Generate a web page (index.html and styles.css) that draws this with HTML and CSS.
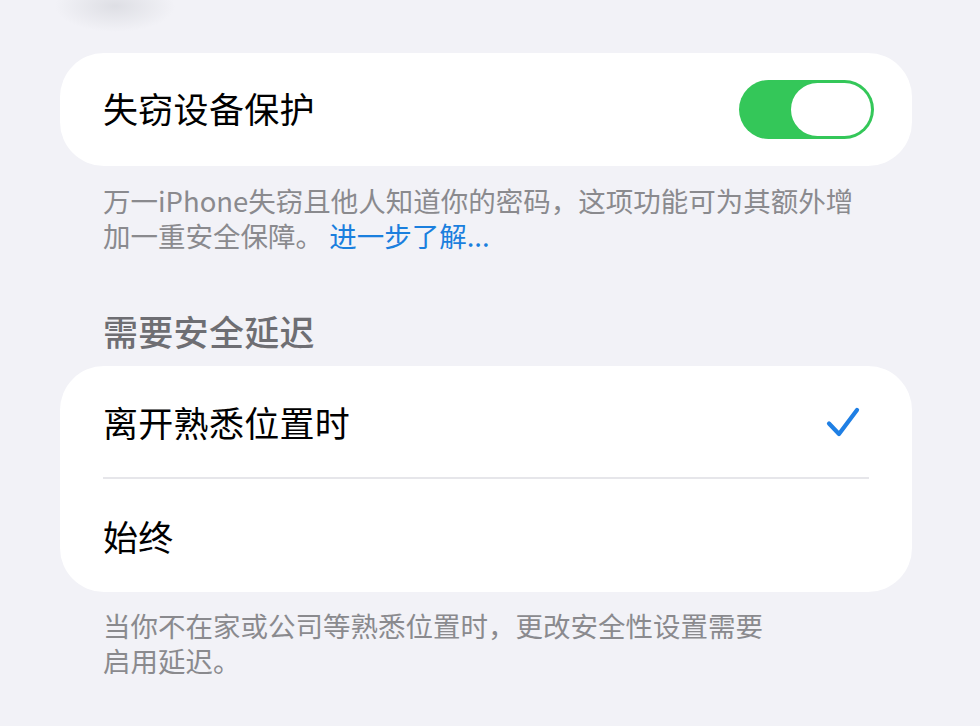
FILE: index.html
```html
<!DOCTYPE html>
<html lang="zh-CN">
<head>
<meta charset="utf-8">
<title>失窃设备保护</title>
<link rel="stylesheet" href="styles.css">
</head>
<body>
<main class="page">
  <section class="card card-single">
    <div class="row row-toggle">
      <span class="label">失窃设备保护</span>
      <span class="toggle"><span class="knob"></span></span>
    </div>
  </section>
  <p class="footer footer-first">万一iPhone失窃且他人知道你的密码，这项功能可为其额外增<br>加一重安全保障。 <a class="link" href="#">进一步了解...</a></p>

  <h2 class="section-header">需要安全延迟</h2>
  <section class="card">
    <div class="row row-first">
      <span class="label">离开熟悉位置时</span>
      <svg class="check" width="34" height="32" viewBox="0 0 34 32" aria-hidden="true">
        <path d="M3 17.5 L13 28 L31 4" fill="none" stroke="#1f7fe4" stroke-width="4.2" stroke-linecap="round" stroke-linejoin="round"/>
      </svg>
    </div>
    <div class="separator"></div>
    <div class="row row-last">
      <span class="label">始终</span>
    </div>
  </section>
  <p class="footer footer-second">当你不在家或公司等熟悉位置时，更改安全性设置需要<br>启用延迟。</p>
</main>
</body>
</html>
```
FILE: styles.css
```css
html, body {
  margin: 0;
  padding: 0;
}
body {
  width: 980px;
  height: 726px;
  overflow: hidden;
  background-color: #f2f2f7;
  background-image: radial-gradient(ellipse 60px 26px at 115px 6px, rgba(215,216,222,0.75), rgba(242,242,247,0) 100%);
  font-family: "Noto Sans CJK SC", "Noto Sans", sans-serif;
  color: #000;
}
.page {
  display: flex;
  flex-direction: column;
  padding: 53px 68px 0 60px;
}
.card {
  background: #fff;
  border-radius: 44px;
  display: flex;
  flex-direction: column;
}
.row {
  display: flex;
  align-items: center;
  justify-content: space-between;
  padding: 0 38px 0 43px;
  box-sizing: border-box;
}
.row-toggle {
  height: 113px;
  padding-bottom: 3px;
}
.row-toggle .toggle {
  margin-top: 3px;
}
.row-first {
  height: 111px;
  padding-right: 52px;
  padding-top: 1px;
}
.row-last {
  height: 113px;
}
.label {
  font-size: 35px;
  line-height: 44px;
  letter-spacing: 0.3px;
}
.toggle {
  width: 135px;
  height: 59px;
  box-sizing: border-box;
  padding: 3px;
  border-radius: 30px;
  background: #34c759;
  display: flex;
  justify-content: flex-end;
}
.knob {
  width: 80px;
  height: 53px;
  border-radius: 27px;
  background: #fff;
}
.check {
  display: block;
}
.separator {
  height: 2px;
  margin: 0 43px;
  background: #e6e6ea;
}
.footer {
  margin: 0;
  padding: 0 43px;
  font-size: 27.5px;
  line-height: 35px;
  color: #8a8a8e;
}
.footer-first {
  margin-top: 17px;
}
.footer-second {
  margin-top: 16px;
}
.link {
  color: #1a7fde;
  text-decoration: none;
}
.section-header {
  margin: 58px 0 15px;
  padding: 0 43px;
  font-size: 35px;
  line-height: 40px;
  font-weight: 500;
  color: #6e6e73;
  letter-spacing: 0.3px;
}
```
